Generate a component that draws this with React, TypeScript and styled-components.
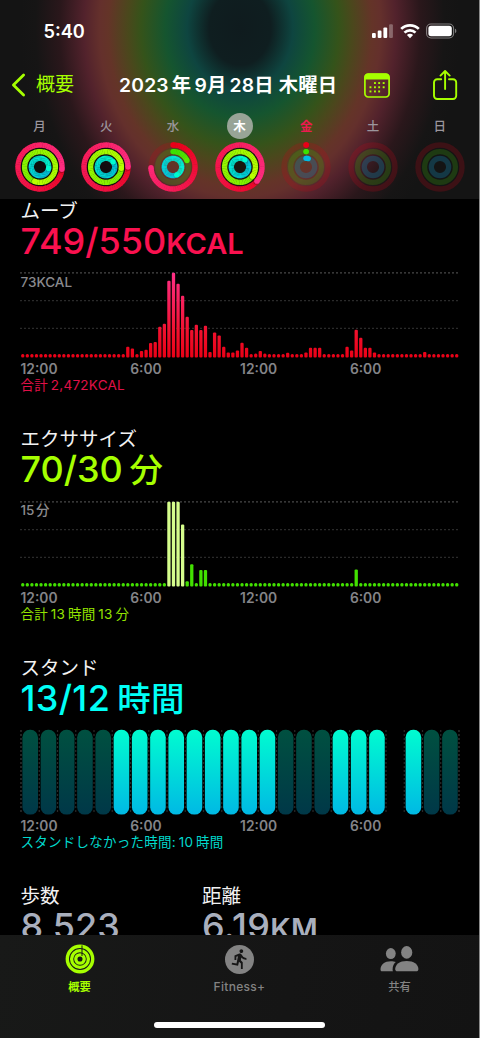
import React from "react";
import styled, { createGlobalStyle } from "styled-components";
import { MdDirectionsRun } from "react-icons/md";

const LIME = "#a6ff00";

const Global = createGlobalStyle`
  body { margin: 0; background: #000; }
  * { box-sizing: border-box; }
  svg { display: block; flex: none; }
`;

const Phone = styled.div`
  width: 480px;
  height: 1038px;
  display: flex;
  flex-direction: column;
  overflow: hidden;
  background: #000;
  border-right: 1px solid #8a8a8a;
  color: #fff;
  font-family: Inter, "Noto Sans CJK JP", sans-serif;
`;

const Header = styled.header`
  height: 198.5px;
  flex: none;
  background: radial-gradient(
      ellipse 220px 264px at 240px 28px,
      #0f1b1e 0,
      #0f1e20 14%,
      #0e4540 24%,
      #15552f 34%,
      #35531a 45%,
      #4a481c 51%,
      #643428 60%,
      #64302c 64%,
      #52222c 71%,
      #2a171b 82%,
      #161515 93%,
      #141414 100%
    );
`;

const StatusBar = styled.div`
  height: 62px;
  padding: 0 22px 0 43.5px;
  display: flex;
  align-items: center;
  justify-content: space-between;
`;

const Clock = styled.span`
  font-size: 18.2px;
  font-weight: 600;
  line-height: 20px;
`;

const StatusIcons = styled.div`
  display: flex;
  align-items: center;
  gap: 6px;
`;

const NavBar = styled.nav`
  height: 46px;
  padding: 0 21px 0 11px;
  display: flex;
  align-items: center;
`;

const Back = styled.a`
  width: 108px;
  display: flex;
  align-items: center;
  gap: 10px;
  color: ${LIME};
  font-size: 19px;
  line-height: 26px;
`;

const DateTitle = styled.h1`
  margin: 0;
  width: 245px;
  font-size: 19.3px;
  font-weight: 600;
  line-height: 24px;
  letter-spacing: 0.2px;
  white-space: nowrap;
  word-spacing: -2px;
`;

const Weekday = styled.span`
  margin-left: 2px;
`;

const NavActions = styled.div`
  flex: 1;
  display: flex;
  align-items: center;
  justify-content: space-between;
`;

const Week = styled.div`
  display: grid;
  grid-template-columns: repeat(7, 66.7px);
  padding: 4.5px 0 0 6.2px;
`;

const Day = styled.div`
  display: flex;
  flex-direction: column;
  align-items: center;
  gap: 3.5px;
`;

const DayName = styled.span<{ $tone: "plain" | "today" | "selected" }>`
  width: 26px;
  height: 26px;
  border-radius: 50%;
  text-align: center;
  font-size: 12.5px;
  font-weight: ${(p) => (p.$tone === "plain" ? 500 : 700)};
  line-height: 27px;
  color: ${(p) => (p.$tone === "today" ? "#ee1a4f" : p.$tone === "selected" ? "#fff" : "#9b969d")};
  background: ${(p) => (p.$tone === "selected" ? "#98a497" : "transparent")};
`;

const Content = styled.main`
  flex: 1;
  min-height: 0;
  overflow: hidden;
  padding-left: 20.5px;
`;

const Section = styled.section`
  height: 228.5px;
`;

const Heading = styled.h2`
  margin: 0;
  font-size: 19.5px;
  font-weight: 400;
  line-height: 24px;
  color: #f2f2f2;
`;

const Value = styled.p<{ $color: string; $loose?: boolean }>`
  margin: 0;
  height: 36px;
  font-size: 36px;
  font-weight: 500;
  line-height: 36px;
  white-space: nowrap;
  letter-spacing: ${(p) => (p.$loose ? "0.35px" : "0")};
  word-spacing: -3px;
  color: ${(p) => p.$color};
`;

const SmallCaps = styled.span`
  font-size: 29px;
  font-weight: 600;
  line-height: 1;
`;

const Unit = styled.span`
  font-size: 33.5px;
`;

const Plot = styled.div`
  position: relative;
  height: 86px;
  margin: 13.5px 0 2px -0.5px;
`;

const Peak = styled.span`
  position: absolute;
  left: 0.5px;
  top: 1.5px;
  font-size: 13.5px;
  font-weight: 500;
  line-height: 16px;
  color: #8a8a8e;
  word-spacing: -2px;
`;

const Axis = styled.div`
  display: grid;
  grid-template-columns: repeat(4, 109.8px);
  font-size: 13.8px;
  font-weight: 600;
  line-height: 18px;
  color: #848488;
`;

const Total = styled.p<{ $color: string }>`
  margin: 0;
  font-size: 13.5px;
  line-height: 15px;
  letter-spacing: 0.25px;
  word-spacing: -1.2px;
  white-space: nowrap;
  color: ${(p) => p.$color};
`;

const Stats = styled.section`
  display: grid;
  grid-template-columns: 181.5px 1fr;
`;

const TabBar = styled.footer`
  height: 103px;
  flex: none;
  display: flex;
  flex-direction: column;
  align-items: center;
  background: linear-gradient(100deg, #181918, #151515 60%, #131313);
`;

const Tabs = styled.div`
  width: 480px;
  height: 87px;
  display: grid;
  grid-template-columns: repeat(3, 160px);
  padding-top: 9px;
`;

const Tab = styled.a<{ $active?: boolean }>`
  display: flex;
  flex-direction: column;
  align-items: center;
  gap: 5px;
  font-size: 11.3px;
  font-weight: ${(p) => (p.$active ? 700 : 500)};
  line-height: 16px;
  color: ${(p) => (p.$active ? LIME : "#838383")};
`;

const TabLatin = styled.span`
  font-size: 12px;
  letter-spacing: 0.3px;
`;

const TabIcon = styled.span`
  width: 40px;
  height: 30px;
  display: flex;
  align-items: center;
  justify-content: center;
`;

const RunBadge = styled.span`
  width: 29px;
  height: 29px;
  border-radius: 50%;
  display: flex;
  align-items: center;
  justify-content: center;
  background: #838383;
  color: #161616;
`;

const HomeIndicator = styled.div`
  width: 171px;
  height: 6px;
  border-radius: 3px;
  background: #fff;
`;

type RGB = [number, number, number];
const mix = (a: RGB, b: RGB, t: number) =>
  `rgb(${a.map((v, i) => Math.round(v + (b[i] - v) * t)).join(",")})`;

const RINGS: { r: number; w: number; from: RGB; to: RGB; track: string }[] = [
  { r: 22, w: 5.4, from: [232, 0, 25], to: [255, 45, 130], track: "rgba(190,10,25,.24)" },
  { r: 15.4, w: 5.3, from: [60, 224, 0], to: [184, 255, 0], track: "rgba(60,170,10,.25)" },
  { r: 8.7, w: 5.3, from: [0, 186, 228], to: [0, 250, 208], track: "rgba(20,125,165,.34)" },
];

const polar = (r: number, deg: number) => {
  const a = ((deg - 90) * Math.PI) / 180;
  return [25 + r * Math.cos(a), 25 + r * Math.sin(a)];
};

/** Three nested goal rings; each value is the sweep in degrees (over 360 wraps). */
function ActivityRings({ sweeps }: { sweeps: (number | null)[] }) {
  const lit = sweeps[0] !== null && sweeps[0] > 360;
  return (
    <svg width="50" height="50" viewBox="0 0 50 50">
      {lit && <circle cx="25" cy="25" r="22" fill="#0b0b0b" fillOpacity=".8" />}
      {RINGS.map((ring, k) => {
        const sweep = sweeps[k];
        if (sweep === null)
          return <circle key={k} cx="25" cy="25" r={ring.r} fill="none" stroke={ring.track} strokeWidth={ring.w} />;
        const start = Math.max(0, sweep - 360);
        const span = sweep - start;
        const full = span >= 360;
        const n = Math.max(1, Math.ceil(span / 6));
        const [sx, sy] = polar(ring.r, start);
        const [ex, ey] = polar(ring.r, sweep);
        const [shx, shy] = polar(ring.r, sweep + 3);
        const base = full ? (k === 1 ? 0.5 : 0.15) : 0;
        return (
          <g key={k}>
            {!full && <circle cx="25" cy="25" r={ring.r} fill="none" stroke={ring.track} strokeWidth={ring.w} />}
            {!full && <circle cx={sx} cy={sy} r={ring.w / 2} fill={mix(ring.from, ring.to, 0)} />}
            {Array.from({ length: n }, (_, i) => {
              const a = start + (span * i) / n;
              const b = start + (span * (i + 1)) / n + (i < n - 1 ? 1 : 0);
              const [x1, y1] = polar(ring.r, a);
              const [x2, y2] = polar(ring.r, b);
              const t = full ? base + ((1 - base) * i) / n : ((i / n) * span) / 300;
              return (
                <path
                  key={i}
                  d={`M${x1} ${y1}A${ring.r} ${ring.r} 0 0 1 ${x2} ${y2}`}
                  fill="none"
                  stroke={mix(ring.from, ring.to, Math.min(1, t))}
                  strokeWidth={ring.w}
                />
              );
            })}
            {full && <circle cx={shx} cy={shy} r={ring.w / 2} fill="#000" fillOpacity=".25" />}
            <circle
              cx={ex}
              cy={ey}
              r={ring.w / 2}
              fill={mix(ring.from, ring.to, full ? 1 : Math.min(1, span / 300))}
            />
          </g>
        );
      })}
    </svg>
  );
}

const WEEK: { name: string; tone: "plain" | "today" | "selected"; sweeps: (number | null)[] }[] = [
  { name: "月", tone: "plain", sweeps: [456, 560, 460] },
  { name: "火", tone: "plain", sweeps: [450, 455, 415] },
  { name: "水", tone: "plain", sweeps: [268, 65, 515] },
  { name: "木", tone: "selected", sweeps: [490, 487, 395] },
  { name: "金", tone: "today", sweeps: [1, 1, 15] },
  { name: "土", tone: "plain", sweeps: [null, null, null] },
  { name: "日", tone: "plain", sweeps: [null, null, null] },
];

const SLOTS = 96;
const PITCH = 4.568;
const IDLE = 3.4;

const MOVE: Record<number, number> = {
  23: 10.7, 24: 9, 26: 6.5, 27: 7.7, 28: 14.5, 29: 15.5, 30: 30.7, 31: 33.7, 32: 76.7, 33: 84.7,
  34: 73.7, 35: 61.7, 36: 40.7, 37: 27.5, 38: 32.7, 39: 27.5, 40: 31.7, 41: 5.5, 42: 25, 43: 22,
  44: 10.7, 45: 5, 46: 5, 47: 7, 48: 14.7, 49: 9.7, 51: 4, 52: 6.5, 53: 4, 58: 4.7, 62: 5,
  63: 9.7, 64: 9.7, 65: 9.7, 71: 10.7, 72: 7, 73: 27.7, 74: 19.7, 75: 9.7, 76: 9.7, 77: 5, 88: 5.5,
};
const EXERCISE: Record<number, number> = {
  32: 84.7, 33: 84.7, 34: 84.7, 35: 62, 36: 5.3, 37: 22.3, 39: 16.5, 40: 16.5, 73: 17,
};

function BarChart({ data, kind }: { data: Record<number, number>; kind: "move" | "exercise" }) {
  const fill = (h: number) => (kind === "move" ? "url(#moveFill)" : h > 40 ? "#d5fd8c" : "#42e000");
  return (
    <svg width="440" height="86" viewBox="0 0 440 86">
      <defs>
        <linearGradient id="moveFill" gradientUnits="userSpaceOnUse" x1="0" y1="86" x2="0" y2="0">
          <stop offset="0" stopColor="#ea0016" />
          <stop offset=".3" stopColor="#f0102c" />
          <stop offset="1" stopColor="#ff3088" />
        </linearGradient>
      </defs>
      {[0.8, 28.6, 56.4].map((y, i) => (
        <line
          key={y}
          x1="0"
          x2="440"
          y1={y}
          y2={y}
          stroke={i === 0 ? "#484848" : "#2a2a2a"}
          strokeWidth="1.2"
          strokeDasharray="2 2"
        />
      ))}
      {Array.from({ length: SLOTS }, (_, i) => {
        const h = data[i] ?? IDLE;
        return (
          <rect key={i} x={1.1 + i * PITCH} y={85.5 - h} width="3.3" height={h} rx={h > 4 ? 1.1 : 1.5} fill={fill(h)} />
        );
      })}
    </svg>
  );
}

const STAND = "-----+++++++++---+++ +--";

function StandChart() {
  return (
    <svg width="440" height="86" viewBox="0 0 440 86">
      <defs>
        <linearGradient id="standOn" x1="0" y1="0" x2="0" y2="1">
          <stop offset="0" stopColor="#00fcd0" />
          <stop offset="1" stopColor="#00b9e4" />
        </linearGradient>
        <linearGradient id="standOff" x1="0" y1="0" x2="0" y2="1">
          <stop offset="0" stopColor="#005040" />
          <stop offset="1" stopColor="#003848" />
        </linearGradient>
      </defs>
      {Array.from({ length: 25 }, (_, i) => (
        <line
          key={i}
          x1={1 + i * 18.25}
          x2={1 + i * 18.25}
          y1="1"
          y2="85"
          stroke={i === 0 || i === 24 ? "#3a3a3a" : "#2a2a2a"}
          strokeWidth="1.2"
          strokeDasharray="2 2"
        />
      ))}
      {STAND.split("").map((s, i) =>
        s === " " ? null : (
          <rect
            key={i}
            x={2.4 + i * 18.25}
            y="0.8"
            width="15.6"
            height="84.8"
            rx="7.4"
            fill={s === "+" ? "url(#standOn)" : "url(#standOff)"}
          />
        ),
      )}
    </svg>
  );
}

const Hours = () => (
  <Axis>
    <span>12:00</span>
    <span>6:00</span>
    <span>12:00</span>
    <span>6:00</span>
  </Axis>
);

const SignalIcon = () => (
  <svg width="22" height="16" viewBox="0 0 22 16" fill="#fff">
    <rect x="0" y="10" width="3.8" height="5" rx="1.1" />
    <rect x="5.7" y="7.6" width="3.8" height="7.4" rx="1.1" />
    <rect x="11.4" y="4.4" width="3.8" height="10.6" rx="1.1" />
    <rect x="17.1" y="1.2" width="3.8" height="13.8" rx="1.1" opacity=".3" />
  </svg>
);

const WifiIcon = () => (
  <svg width="20" height="16" viewBox="0 0 20 16" fill="none" stroke="#fff" strokeWidth="2.7">
    <path d="M1.2 5.9a12.6 12.6 0 0 1 17.6 0" />
    <path d="M4.5 9.6a7.8 7.8 0 0 1 11 0" />
    <path d="M10 15.2 6.9 12.1a4.4 4.4 0 0 1 6.2 0z" fill="#fff" stroke="none" />
  </svg>
);

const BatteryIcon = () => (
  <svg width="31" height="16" viewBox="0 0 31 16">
    <rect x="0.6" y="1" width="27" height="14" rx="4.4" fill="none" stroke="#fff" strokeOpacity=".45" strokeWidth="1.1" />
    <rect x="2.4" y="2.8" width="23.4" height="10.4" rx="2.6" fill="#fff" />
    <path d="M29 5.8c1.8.6 1.8 3.8 0 4.4z" fill="#fff" fillOpacity=".45" />
  </svg>
);

const ChevronIcon = () => (
  <svg width="15" height="24" viewBox="0 0 15 24" fill="none" stroke={LIME} strokeWidth="2.8" strokeLinecap="round" strokeLinejoin="round">
    <path d="M12.6 2 2.4 12l10.2 10" />
  </svg>
);

const CalendarIcon = () => {
  const rows = [
    { y: 10, xs: [10.9, 15.1, 19.6] },
    { y: 14.2, xs: [6.4, 10.9, 15.1, 19.6] },
    { y: 18.4, xs: [6.4, 10.9, 15.1] },
  ];
  return (
    <svg width="26" height="25" viewBox="0 0 26 25">
      <rect x="0.9" y="1.2" width="24.2" height="22.8" rx="3.4" fill="none" stroke={LIME} strokeWidth="1.7" />
      <path d="M.4 6.6V4.4A3.8 3.8 0 0 1 4.2.6h17.6a3.8 3.8 0 0 1 3.8 3.8v2.2z" fill={LIME} />
      {rows.map((row) =>
        row.xs.map((x) => <rect key={`${x}-${row.y}`} x={x - 0.9} y={row.y - 0.9} width="1.9" height="1.9" fill={LIME} />),
      )}
    </svg>
  );
};

const ShareIcon = () => (
  <svg width="25" height="31" viewBox="0 0 25 31" fill="none" stroke={LIME} strokeWidth="1.9" strokeLinecap="round" strokeLinejoin="round">
    <path d="M8.2 9.2H4.2a3.2 3.2 0 0 0-3.2 3.2v13.4a3.2 3.2 0 0 0 3.2 3.2h15.8a3.2 3.2 0 0 0 3.2-3.2V12.4a3.2 3.2 0 0 0-3.2-3.2h-4" />
    <path d="M12.1 19V1.2M7.5 5.6l4.6-4.6L16.7 5.6" />
  </svg>
);

const SummaryIcon = () => (
  <svg width="30" height="30" viewBox="0 0 30 30" fill="none" stroke={LIME}>
    <circle cx="15" cy="15" r="12.7" strokeWidth="3.4" />
    <circle cx="15" cy="15" r="8.4" strokeWidth="3.3" />
    <circle cx="15" cy="15" r="4.2" strokeWidth="3.3" />
    <path d="M17 1.4v10.6" stroke="#161716" strokeWidth="1" />
  </svg>
);

const PeopleIcon = () => (
  <svg width="40" height="30" viewBox="0 0 40 30" fill="#838383">
    <ellipse cx="10.8" cy="9.6" rx="4.9" ry="5.5" />
    <path d="M.5 25.4c0-4.8 4.200-8.200 10.300-8.200 2 0 3.700.400 5 .900-1.900 1.400-3.200 4-3.200 7.300 0 .800.100 1.300.400 1.900H2.400c-1.300 0-1.900-.700-1.900-1.900z" />
    <ellipse cx="26.700" cy="8.4" rx="5.6" ry="6.3" />
    <path d="M15.200 25c0-4.600 4.500-8.100 11.500-8.100S38.400 20.400 38.400 25c0 1.600-.800 2.300-2.300 2.300H17.500c-1.500 0-2.300-.700-2.300-2.300z" />
  </svg>
);

export default function App() {
  return (
    <Phone>
      <Global />
      <Header>
        <StatusBar>
          <Clock>5:40</Clock>
          <StatusIcons>
            <SignalIcon />
            <WifiIcon />
            <BatteryIcon />
          </StatusIcons>
        </StatusBar>
        <NavBar>
          <Back>
            <ChevronIcon />
            概要
          </Back>
          <DateTitle>
            2023 年 9月 28日 <Weekday>木曜日</Weekday>
          </DateTitle>
          <NavActions>
            <CalendarIcon />
            <ShareIcon />
          </NavActions>
        </NavBar>
        <Week>
          {WEEK.map((d) => (
            <Day key={d.name}>
              <DayName $tone={d.tone}>{d.name}</DayName>
              <ActivityRings sweeps={d.sweeps} />
            </Day>
          ))}
        </Week>
      </Header>
      <Content>
        <Section>
          <Heading>ムーブ</Heading>
          <Value $color="#fa114f">
            749/550<SmallCaps>KCAL</SmallCaps>
          </Value>
          <Plot>
            <BarChart data={MOVE} kind="move" />
            <Peak>73KCAL</Peak>
          </Plot>
          <Hours />
          <Total $color="#e01048">合計 2,472KCAL</Total>
        </Section>
        <Section>
          <Heading>エクササイズ</Heading>
          <Value $color={LIME}>
            70/30 <Unit>分</Unit>
          </Value>
          <Plot>
            <BarChart data={EXERCISE} kind="exercise" />
            <Peak>15 分</Peak>
          </Plot>
          <Hours />
          <Total $color="#94e400">合計 13 時間 13 分</Total>
        </Section>
        <Section>
          <Heading>スタンド</Heading>
          <Value $color="#00fff6" $loose>
            13/12 <Unit>時間</Unit>
          </Value>
          <Plot>
            <StandChart />
          </Plot>
          <Hours />
          <Total $color="#00d8cc">スタンドしなかった時間: 10 時間</Total>
        </Section>
        <Stats>
          <div>
            <Heading>歩数</Heading>
            <Value $color="#a9afbd">8,523</Value>
          </div>
          <div>
            <Heading>距離</Heading>
            <Value $color="#a9afbd" $loose>
              6.19<SmallCaps>KM</SmallCaps>
            </Value>
          </div>
        </Stats>
      </Content>
      <TabBar>
        <Tabs>
          <Tab $active>
            <TabIcon>
              <SummaryIcon />
            </TabIcon>
            概要
          </Tab>
          <Tab>
            <TabIcon>
              <RunBadge>
                <MdDirectionsRun size={22} />
              </RunBadge>
            </TabIcon>
            <TabLatin>Fitness+</TabLatin>
          </Tab>
          <Tab>
            <TabIcon>
              <PeopleIcon />
            </TabIcon>
            共有
          </Tab>
        </Tabs>
        <HomeIndicator />
      </TabBar>
    </Phone>
  );
}
